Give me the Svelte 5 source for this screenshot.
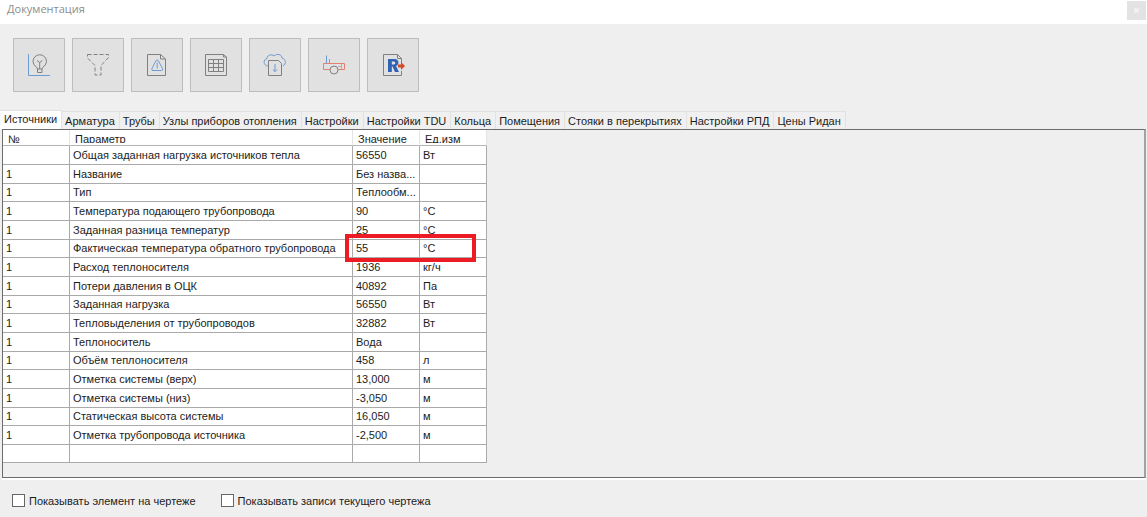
<script lang="ts">
  interface Row {
    no: string;
    name: string;
    value: string;
    unit: string;
    marked?: boolean;
  }

  const tabs = [
    "Источники",
    "Арматура",
    "Трубы",
    "Узлы приборов отопления",
    "Настройки",
    "Настройки TDU",
    "Кольца",
    "Помещения",
    "Стояки в перекрытиях",
    "Настройки РПД",
    "Цены Ридан",
  ];

  const tools = [
    { id: "bulb", label: "Подсказки" },
    { id: "filter", label: "Фильтр" },
    { id: "warning", label: "Ошибки" },
    { id: "grid", label: "Таблица" },
    { id: "cloud", label: "Загрузить" },
    { id: "device", label: "Прибор" },
    { id: "revit", label: "Экспорт" },
  ];

  const rows: Row[] = [
    { no: "", name: "Общая заданная нагрузка источников тепла", value: "56550", unit: "Вт" },
    { no: "1", name: "Название", value: "Без назва...", unit: "" },
    { no: "1", name: "Тип", value: "Теплообм...", unit: "" },
    { no: "1", name: "Температура подающего трубопровода", value: "90", unit: "°C" },
    { no: "1", name: "Заданная разница температур", value: "25", unit: "°C" },
    { no: "1", name: "Фактическая температура обратного трубопровода", value: "55", unit: "°C", marked: true },
    { no: "1", name: "Расход теплоносителя", value: "1936", unit: "кг/ч" },
    { no: "1", name: "Потери давления в ОЦК", value: "40892", unit: "Па" },
    { no: "1", name: "Заданная нагрузка", value: "56550", unit: "Вт" },
    { no: "1", name: "Тепловыделения от трубопроводов", value: "32882", unit: "Вт" },
    { no: "1", name: "Теплоноситель", value: "Вода", unit: "" },
    { no: "1", name: "Объём теплоносителя", value: "458", unit: "л" },
    { no: "1", name: "Отметка системы (верх)", value: "13,000", unit: "м" },
    { no: "1", name: "Отметка системы (низ)", value: "-3,050", unit: "м" },
    { no: "1", name: "Статическая высота системы", value: "16,050", unit: "м" },
    { no: "1", name: "Отметка трубопровода источника", value: "-2,500", unit: "м" },
    { no: "", name: "", value: "", unit: "" },
  ];

  let active = $state(0);
  let showElement = $state(false);
  let showRecords = $state(false);
</script>

<div class="window">
  <header class="titlebar">
    <span class="title">Документация</span>
    <button class="close" type="button" aria-label="Закрыть">
      <svg width="5" height="5" viewBox="0 0 5 5"><path d="M.5 .5l4 4M4.5 .5l-4 4" /></svg>
    </button>
  </header>

  <div class="toolbar">
    {#each tools as tool (tool.id)}
      <button class="tool" type="button" aria-label={tool.label}>
        <svg width="26" height="26" viewBox="0 0 26 26">
          {#if tool.id === "bulb"}
            <path class="blue" d="M2.5 2v21.5h21.5" />
            <path
              class="ink"
              d="M11.5 17c0-2-4.5-3.5-4.5-7.5a6.5 6.5 0 0 1 13.5 0c0 4-4.5 5.5-4.5 7.5zM11.5 17v3.5H16V17M11 8.5l2.7 2 2.7-2M13.7 10.5V17"
            />
          {:else if tool.id === "filter"}
            <path class="ink dashed" d="M2.5 2.5h21v3L16 13.5v9.5h-6v-9.5L2.5 6z" />
          {:else if tool.id === "warning"}
            <path class="ink" d="M3.5 2.5h13l5 4.5v16.5h-18zM16.5 2.5V7h5" />
            <path class="blue" d="M12 8.5q1.2-1 2.2 0l4.3 8q.7 2-1 2H9q-1.7 0-1-2zM13.2 10.5v6" />
          {:else if tool.id === "grid"}
            <path
              class="ink"
              d="M2.5 2.5h18l3 2.5v18.5h-21zM20.5 2.5V5h3M5.5 7.5h15v12h-15zM5.5 11.5h15M5.5 15.5h15M10.5 7.5v12M15.5 7.5v12"
            />
          {:else if tool.id === "cloud"}
            <path class="blue" d="M6 14C1 13.5 1 7.5 5 6.5c0-4 5-4.5 7-2.5 3-3 8-1.5 8 2 4 1 4.5 6 1 8" />
            <path class="ink" d="M6.5 8.5h10l3 3v12h-13z" />
            <path class="blue" d="M13 12v7.5M10.800 17.5l2.200 2.200 2.200-2.200" />
          {:else if tool.id === "device"}
            <path class="blue" d="M5.5 3.5v8" />
            <path class="red" d="M8.5 7v4.5M9 17.5H2.5v-6h21v6H17" />
            <path class="pale" d="M17 14.5h4M20.5 12v5" />
            <circle class="ink" cx="13" cy="18" r="4" />
          {:else}
            <path class="ink" d="M21.5 11V6.5l-4-4h-14v21h18V19M17.5 2.5v4h4" />
            <path
              class="letter"
              fill-rule="evenodd"
              d="M8 7h6.5c5 0 5 6 1.5 7l3 6h-4l-2.5-5.5h-.7V20H8zM11.8 9.5v3h2c2 0 2-3 0-3z"
            />
            <path class="arrow" d="M18 12.5h3V10l4 4-4 4v-2.5h-3z" />
          {/if}
        </svg>
      </button>
    {/each}
  </div>

  <div class="tabs" role="tablist">
    {#each tabs as tab, i (tab)}
      <button
        class="tab"
        class:active={active === i}
        type="button"
        role="tab"
        aria-selected={active === i}
        onclick={() => (active = i)}>{tab}</button
      >
    {/each}
  </div>

  <main class="panel">
    <table>
      <colgroup>
        <col class="c-no" />
        <col class="c-name" />
        <col class="c-val" />
        <col class="c-val" />
      </colgroup>
      <thead>
        <tr>
          <th><div>№</div></th>
          <th><div>Параметр</div></th>
          <th><div>Значение</div></th>
          <th><div>Ед.изм</div></th>
        </tr>
      </thead>
      <tbody>
        {#each rows as row, i (i)}
          <tr>
            <td>{row.no}</td>
            <td>{row.name}</td>
            <td class:marked={row.marked}>{row.value}</td>
            <td>{row.unit}</td>
          </tr>
        {/each}
      </tbody>
    </table>
  </main>

  <footer class="options">
    <label><input type="checkbox" bind:checked={showElement} />Показывать элемент на чертеже</label>
    <label><input type="checkbox" bind:checked={showRecords} />Показывать записи текущего чертежа</label>
  </footer>
</div>

<style>
  :global(body) {
    background: #efefef;
  }

  .window {
    font-family: "Liberation Sans", Arial, sans-serif;
    font-size: 11px;
    color: #1c1c1c;
  }

  button {
    font: inherit;
    color: inherit;
    padding: 0;
  }

  .titlebar {
    display: flex;
    justify-content: space-between;
    height: 24px;
    background: #fff;
  }

  .title {
    padding-left: 7px;
    font-family: "Open Sans", "Noto Sans", sans-serif;
    font-size: 11px;
    line-height: 18px;
    color: #8c8c8c;
  }

  .close {
    display: flex;
    align-items: center;
    justify-content: center;
    width: 19px;
    height: 19px;
    margin: 1px 1px 0 0;
    border: 0;
    background: #e3e3e3;
  }

  .close path {
    stroke: #f2f2f2;
    stroke-width: 2;
  }

  .toolbar {
    display: flex;
    gap: 7px;
    padding: 14px 13px 18px;
  }

  .tool {
    display: flex;
    align-items: center;
    justify-content: center;
    width: 52px;
    height: 54px;
    border: 1px solid #bdbdbd;
    background: #e1e1e1;
  }

  .tool svg {
    fill: none;
    stroke-width: 1;
  }

  .ink {
    stroke: #808080;
  }

  .dashed {
    stroke-dasharray: 4 2;
  }

  .blue {
    stroke: #6d9bd3;
  }

  .red {
    stroke: #e4806f;
  }

  .pale {
    stroke: #c5a9a4;
  }

  .letter {
    fill: #2f62b4;
  }

  .arrow {
    fill: #d34a26;
  }

  .tabs {
    display: flex;
    align-items: flex-end;
    height: 19px;
  }

  .tab {
    height: 18px;
    padding: 0 4px 0 3px;
    border: solid #e2e2e2;
    border-width: 1px 1px 0 0;
    background: #f0f0f0;
    line-height: 16px;
    white-space: nowrap;
  }

  .tab.active {
    height: 19px;
    padding: 0 4px 2px;
    background: #fff;
  }

  .panel {
    margin: 0 1px 0 2px;
    padding-bottom: 14px;
    border: 1px solid #6c6c6c;
    border-right: 2px solid #a2a2a2;
    box-shadow: 0 2px #fff;
  }

  table {
    width: 484px;
    table-layout: fixed;
    border-collapse: separate;
    border-spacing: 0;
    background: #fff;
  }

  .c-no {
    width: 67px;
  }

  .c-name {
    width: 283px;
  }

  .c-val {
    width: 67px;
  }

  th,
  td {
    box-sizing: border-box;
  }

  th {
    height: 16px;
    padding: 3px 5px 0;
    border-right: 1px solid #e4e4e4;
    border-bottom: 1px solid #b4b4b4;
    font-weight: normal;
    text-align: left;
    vertical-align: top;
  }

  th div {
    height: 10px;
    line-height: 13px;
    overflow: hidden;
  }

  td {
    position: relative;
    height: 19px;
    padding: 0 3px;
    border-right: 1px solid #aaa;
    border-bottom: 1px solid #aaa;
    line-height: 17px;
    white-space: nowrap;
  }

  tr:nth-child(3n) td,
  tr:last-child td {
    height: 18px;
  }

  /* Frame over the value and unit cells */
  .marked::after {
    content: "";
    position: absolute;
    z-index: 1;
    top: -6px;
    left: -8px;
    width: 123px;
    height: 20px;
    border: 4px solid #ed1c24;
  }

  .options {
    display: flex;
    gap: 25px;
    padding: 16px 12px 8px;
  }

  .options label {
    display: flex;
    align-items: center;
    gap: 4px;
  }

  .options input {
    appearance: none;
    box-sizing: border-box;
    width: 13px;
    height: 13px;
    margin: 0;
    border: 1px solid #666;
    background: #fff;
  }

  .options input:checked {
    background: #666;
    box-shadow: inset 0 0 0 2px #fff;
  }
</style>
